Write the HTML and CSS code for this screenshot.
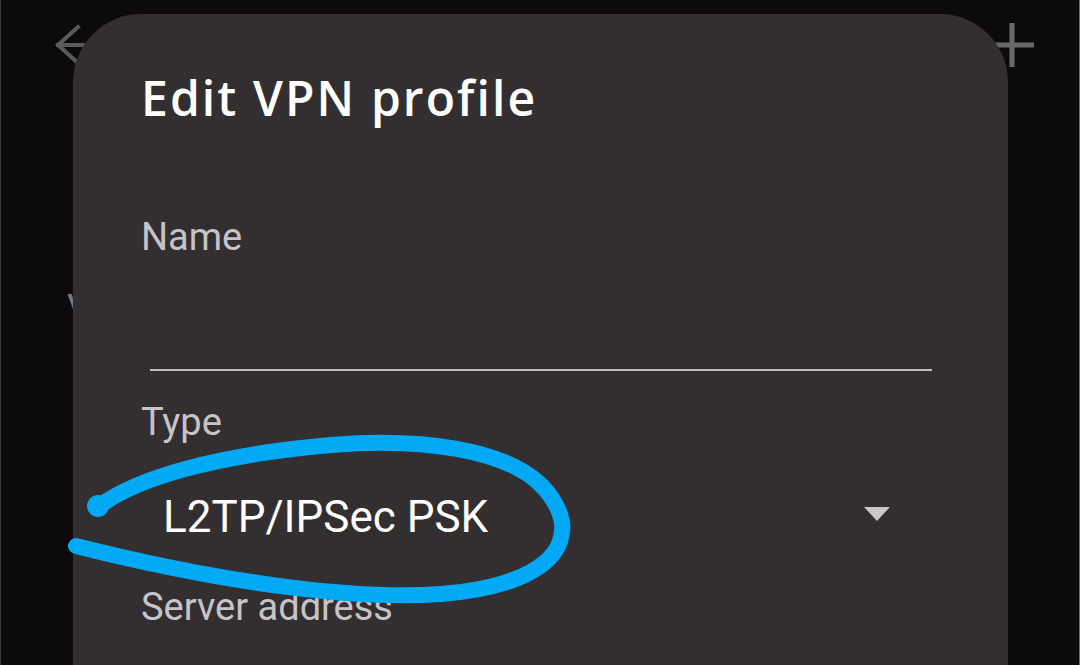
FILE: index.html
```html
<!DOCTYPE html>
<html lang="en">
<head>
<meta charset="utf-8">
<title>Edit VPN profile</title>
<link rel="stylesheet" href="styles.css">
</head>
<body>
<div class="screen">
  <header class="appbar">
    <svg class="icon-back" width="40" height="44" viewBox="0 0 40 44">
      <path d="M24 4 L4 22 L24 40 M4 22 H40" fill="none" stroke="#5b5a5b" stroke-width="4" stroke-linecap="square"/>
    </svg>
    <svg class="icon-add" width="48" height="48" viewBox="0 0 48 48">
      <path d="M24 2 V46 M2 24 H46" fill="none" stroke="#6a696a" stroke-width="5"/>
    </svg>
  </header>
  <section class="list">
    <div class="list-item">VPN</div>
  </section>

  <div class="dialog">
    <h1 class="dialog-title">Edit VPN profile</h1>
    <div class="field">
      <div class="label label-name">Name</div>
      <div class="input"></div>
    </div>
    <div class="field">
      <div class="label label-type">Type</div>
      <div class="spinner">
        <span class="spinner-value">L2TP/IPSec PSK</span>
        <span class="spinner-arrow"></span>
      </div>
    </div>
    <div class="field">
      <div class="label label-server">Server address</div>
    </div>
  </div>

  <svg class="annotation" width="1080" height="665" viewBox="0 0 1080 665">
    <path d="M97 507 C135 478, 215 455, 330 445 C420 437, 505 450, 540 485 C562 507, 562 528, 561 530 C560 562, 520 588, 440 594 C360 600, 230 585, 75 546"
          fill="none" stroke="#03a9f4" stroke-width="16" stroke-linecap="round" stroke-linejoin="round"/>
    <circle cx="97" cy="506" r="11" fill="#03a9f4"/>
  </svg>
</div>
</body>
</html>
```

FILE: styles.css
```css
* { box-sizing: border-box; }

html, body {
  margin: 0;
  padding: 0;
  background: #0c0a0b;
}

.screen {
  position: relative;
  width: 1080px;
  height: 665px;
  overflow: hidden;
  background: #0c0a0b;
  border-left: 1px solid #3a3a3a;
  border-right: 1px solid #6a6a6a;
  font-family: Roboto, "Liberation Sans", sans-serif;
}

.appbar {
  display: flex;
  justify-content: space-between;
  align-items: center;
  height: 90px;
  padding: 0 43px 0 53px;
}

.icon-back, .icon-add { display: block; }

.list {
  padding: 200px 0 0 66px;
}

.list-item {
  font-size: 38px;
  line-height: 38px;
  color: #7a787a;
}

.dialog {
  position: absolute;
  left: 72px;
  top: 14px;
  width: 935px;
  height: 720px;
  background: #332f31;
  border-radius: 68px;
  padding: 61px 76px 0 68px;
}

.dialog-title {
  margin: 0;
  font-family: "Open Sans", Roboto, sans-serif;
  font-weight: 600;
  font-size: 48px;
  line-height: 45px;
  letter-spacing: 2.1px;
  color: #ffffff;
}

.label {
  font-size: 38px;
  line-height: 38px;
  color: #c6c4c6;
}

.label-name { margin-top: 98px; }

.input {
  margin-left: 9px;
  height: 115px;
  border-bottom: 2px solid #bdbcbd;
}

.label-type { margin-top: 32px; }

.spinner {
  display: flex;
  align-items: center;
  justify-content: space-between;
  margin-top: 54px;
  padding: 0 42px 0 22px;
  height: 44px;
}

.spinner-value {
  font-size: 44px;
  line-height: 44px;
  color: #ffffff;
}

.spinner-arrow {
  width: 0;
  height: 0;
  border-left: 13px solid transparent;
  border-right: 13px solid transparent;
  border-top: 14px solid #c8c6c8;
  margin-top: -6px;
}

.label-server { margin-top: 49px; }

.annotation {
  position: absolute;
  left: 0;
  top: 0;
  pointer-events: none;
}
```
